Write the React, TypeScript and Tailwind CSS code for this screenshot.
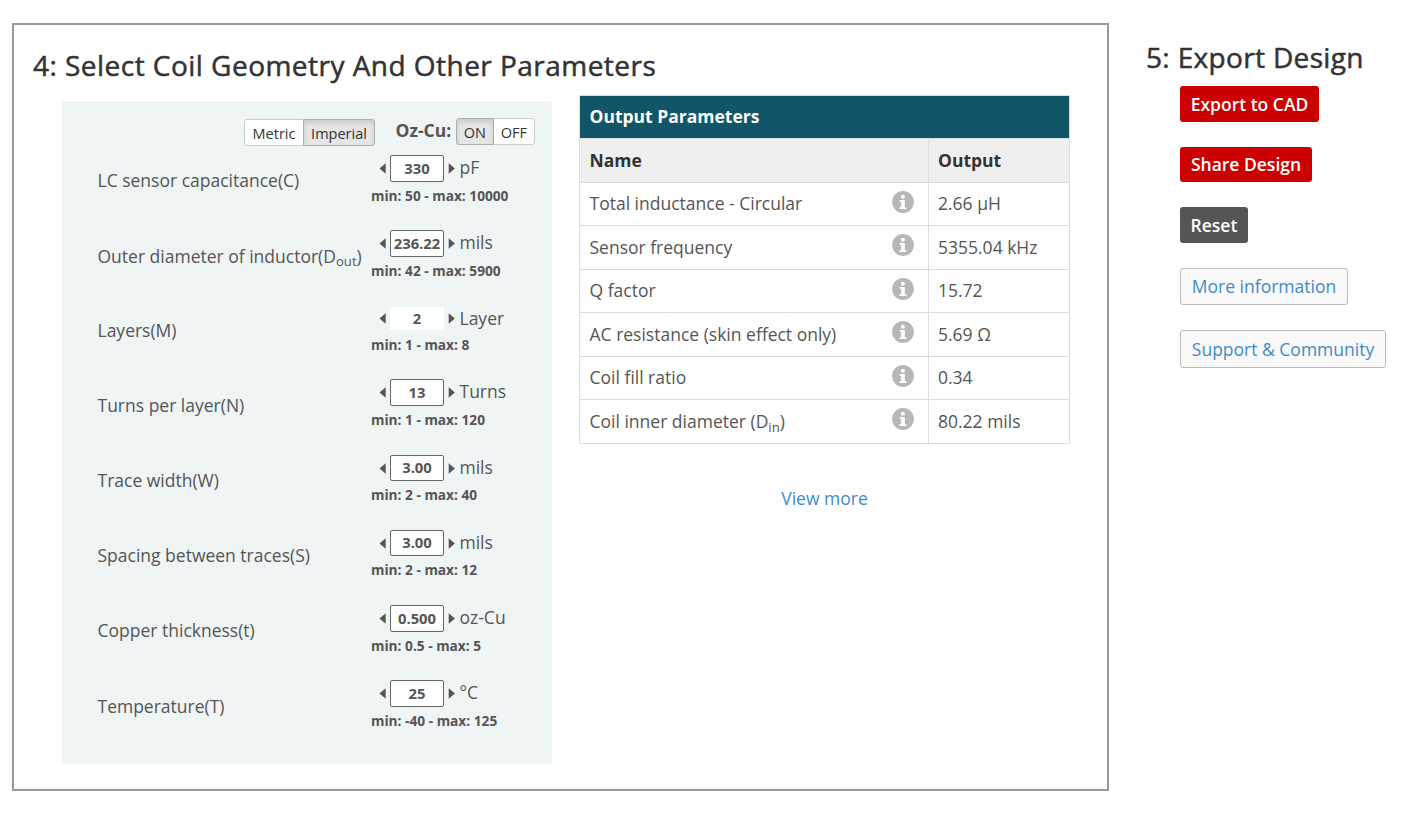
import React from "react";

type Param = {
  label: React.ReactNode;
  value: string;
  unit: string;
  range: string;
  row: string;
  input: string;
  labelPad: string;
  unitShift: string;
  rangeGap: string;
};

const bordered = "h-[27px] border border-[#666] rounded-[2px]";
const bordered26 = "h-[26px] self-start border border-[#666] rounded-[2px]";
const base = {
  row: "h-[75px]",
  input: bordered,
  labelPad: "pt-[13px]",
  unitShift: "-mt-[3px]",
  rangeGap: "mt-[4px]",
};

const params: Param[] = [
  { ...base, label: "LC sensor capacitance(C)", value: "330", unit: "pF", range: "min: 50 - max: 10000" },
  { ...base, label: <>Outer diameter of inductor(D<Sub>out</Sub>)</>, value: "236.22", unit: "mils", range: "min: 42 - max: 5900", labelPad: "pt-[14px]" },
  { ...base, label: "Layers(M)", value: "2", unit: "Layer", range: "min: 1 - max: 8", row: "h-[74px]", input: "h-[23px]", unitShift: "-mt-px", rangeGap: "mt-[3px]" },
  { ...base, label: "Turns per layer(N)", value: "13", unit: "Turns", range: "min: 1 - max: 120", row: "h-[76px]", labelPad: "pt-[14px]" },
  { ...base, label: "Trace width(W)", value: "3.00", unit: "mils", range: "min: 2 - max: 40", input: bordered26, rangeGap: "mt-[3px]" },
  { ...base, label: "Spacing between traces(S)", value: "3.00", unit: "mils", range: "min: 2 - max: 12", input: bordered26, rangeGap: "mt-[3px]" },
  { ...base, label: "Copper thickness(t)", value: "0.500", unit: "oz-Cu", range: "min: 0.5 - max: 5" },
  { ...base, label: "Temperature(T)", value: "25", unit: "°C", range: "min: -40 - max: 125", labelPad: "pt-[14px]" },
];

const short = { row: "h-[43px]", text: "pb-[2px]", icon: "-mt-[4px]" };
const tall = { row: "h-[44px]", text: "", icon: "-mt-[5px]" };

const outputs: { name: React.ReactNode; value: string; row: string; text: string; icon: string }[] = [
  { ...short, name: "Total inductance - Circular", value: "2.66 µH" },
  { ...tall, name: "Sensor frequency", value: "5355.04 kHz" },
  { ...short, name: "Q factor", value: "15.72" },
  { ...tall, name: "AC resistance (skin effect only)", value: "5.69 Ω" },
  { ...short, name: "Coil fill ratio", value: "0.34" },
  { ...tall, name: <>Coil inner diameter (D<Sub>in</Sub>)</>, value: "80.22 mils" },
];

function Sub({ children }: { children: React.ReactNode }) {
  return <sub className="text-[75%]">{children}</sub>;
}

function Arrow({ left }: { left?: boolean }) {
  return (
    <svg className="-mt-px h-[11px] w-[7px] shrink-0" viewBox="0 0 7 11" fill="#555">
      <path d={left ? "M6.7 0.2V10.8L0.5 5.5Z" : "M0.7 0.2V10.8L6.9 5.5Z"} />
    </svg>
  );
}

function InfoIcon({ className }: { className: string }) {
  return (
    <svg className={`h-[22px] w-[22px] shrink-0 ${className}`} viewBox="0 0 22 22">
      <circle cx="11" cy="11" r="10.9" fill="#b7b7b7" />
      <circle cx="10.9" cy="5.8" r="2" fill="#fff" />
      <path d="M7.6 8.9H12.8V16.2H14.4V18H7.5V16.2H9.1V10.7H7.6Z" fill="#fff" />
    </svg>
  );
}

function ParamRow({ p }: { p: Param }) {
  return (
    <div className={`flex ${p.row}`}>
      <div className={`w-[273.5px] text-[17.5px] leading-[25px] whitespace-nowrap ${p.labelPad}`}>{p.label}</div>
      <div>
        <div className="flex h-[27px] items-center pl-[8px]">
          <Arrow left />
          <input
            readOnly
            value={p.value}
            className={`ml-[4px] w-[54px] bg-white px-0 pt-0 pb-[2px] text-center text-[14.8px] font-bold outline-none ${p.input}`}
          />
          <span className="ml-[4px] flex">
            <Arrow />
          </span>
          <span className={`ml-[4.5px] text-[17.5px] leading-[24px] ${p.unitShift}`}>{p.unit}</span>
        </div>
        <div className={`text-[13.7px] leading-[20px] font-bold whitespace-nowrap ${p.rangeGap}`}>{p.range}</div>
      </div>
    </div>
  );
}

function Toggle({ items, active }: { items: [string, string][]; active: string }) {
  return (
    <div className="flex h-[27px] text-[14.5px] text-[#333]">
      {items.map(([name, width], i) => (
        <button
          key={name}
          className={`${width} border pt-[2px] leading-[22px] ${i === 0 ? "rounded-l-[3px]" : "-ml-px rounded-r-[3px]"} ${
            name === active
              ? "z-1 border-[#adadad] bg-[#e6e6e6] shadow-[inset_0_3px_5px_rgba(0,0,0,0.125)]"
              : "border-[#ccc] bg-white"
          }`}
        >
          {name}
        </button>
      ))}
    </div>
  );
}

export default function App() {
  return (
    <div className="flex h-[816px] w-[1428px] items-start overflow-hidden bg-white pt-[23px] pl-[12px] font-['Open_Sans',sans-serif] text-[#555]">
      <section className="h-[768px] w-[1097px] shrink-0 border-2 border-[#999] pl-[19px]">
        <h2 className="mt-[20px] h-[40px] text-[28px] leading-[40px] tracking-[0.47px] whitespace-nowrap text-[#333] [-webkit-text-stroke:0.5px_#333]">
          4: Select Coil Geometry And Other Parameters
        </h2>
        <div className="flex items-start">
          <div className="mt-[16px] ml-[29px] h-[663px] w-[490px] bg-[#eff4f5] pl-[35.5px]">
            <div className="flex h-[54px] pl-[146.5px]">
              <div className="pt-[18px]">
                <Toggle items={[["Metric", "w-[60px]"], ["Imperial", "w-[72px]"]]} active="Imperial" />
              </div>
              <div className="ml-[20.5px] pt-[16px] text-[17.5px] leading-[26px] font-bold">Oz-Cu:</div>
              <div className="ml-[4.8px] pt-[17px]">
                <Toggle items={[["ON", "w-[37.5px]"], ["OFF", "w-[42.5px]"]]} active="ON" />
              </div>
            </div>
            {params.map((p, i) => (
              <ParamRow key={i} p={p} />
            ))}
          </div>
          <div className="mt-[10px] ml-[27px] w-[491px]">
            <div className="border border-[#ddd] text-[17.5px]">
              <div className="flex h-[42px] items-center bg-[#115566] pb-[2px] pl-[9.5px] font-bold text-white">Output Parameters</div>
              <div className="flex h-[44px] border-t border-[#ddd] bg-[#efefef] font-bold text-[#333]">
                <div className="flex w-[349px] items-center border-r border-[#ddd] pl-[9.5px]">Name</div>
                <div className="flex items-center pl-[9px]">Output</div>
              </div>
              {outputs.map((o, i) => (
                <div key={i} className={`flex border-t border-[#ddd] ${o.row}`}>
                  <div className="flex w-[349px] items-center justify-between border-r border-[#ddd] pr-[14px] pl-[9.5px]">
                    <span className={o.text}>{o.name}</span>
                    <InfoIcon className={o.icon} />
                  </div>
                  <div className={`flex items-center pl-[9px] ${o.text}`}>{o.value}</div>
                </div>
              ))}
            </div>
            <div className="mt-[42px] text-center text-[17.5px] leading-[25px] text-[#428bca]">View more</div>
          </div>
        </div>
      </section>
      <aside className="ml-[37px] flex flex-col items-start">
        <h2 className="mt-[14px] h-[40px] text-[28px] leading-[40px] tracking-[0.34px] whitespace-nowrap text-[#333] [-webkit-text-stroke:0.5px_#333]">
          5: Export Design
        </h2>
        <div className="mt-[9px] ml-[34px] flex flex-col items-start text-[17.5px] whitespace-nowrap">
          <button className="h-[36px] w-[139px] rounded-[3px] bg-[#cc0000] font-semibold text-white">Export to CAD</button>
          <button className="mt-[25px] h-[35px] w-[132px] rounded-[3px] bg-[#cc0000] font-semibold text-white">Share Design</button>
          <button className="mt-[25px] h-[36px] w-[68px] rounded-[3px] bg-[#555] font-semibold text-white">Reset</button>
          <button className="mt-[25px] h-[37px] w-[168px] rounded-[3px] border border-[#bbb] bg-[#f9f9f9] text-[#428bca]">More information</button>
          <button className="mt-[25px] h-[38px] w-[206px] rounded-[3px] border border-[#bbb] bg-[#f9f9f9] text-[#428bca]">Support &amp; Community</button>
        </div>
      </aside>
    </div>
  );
}
